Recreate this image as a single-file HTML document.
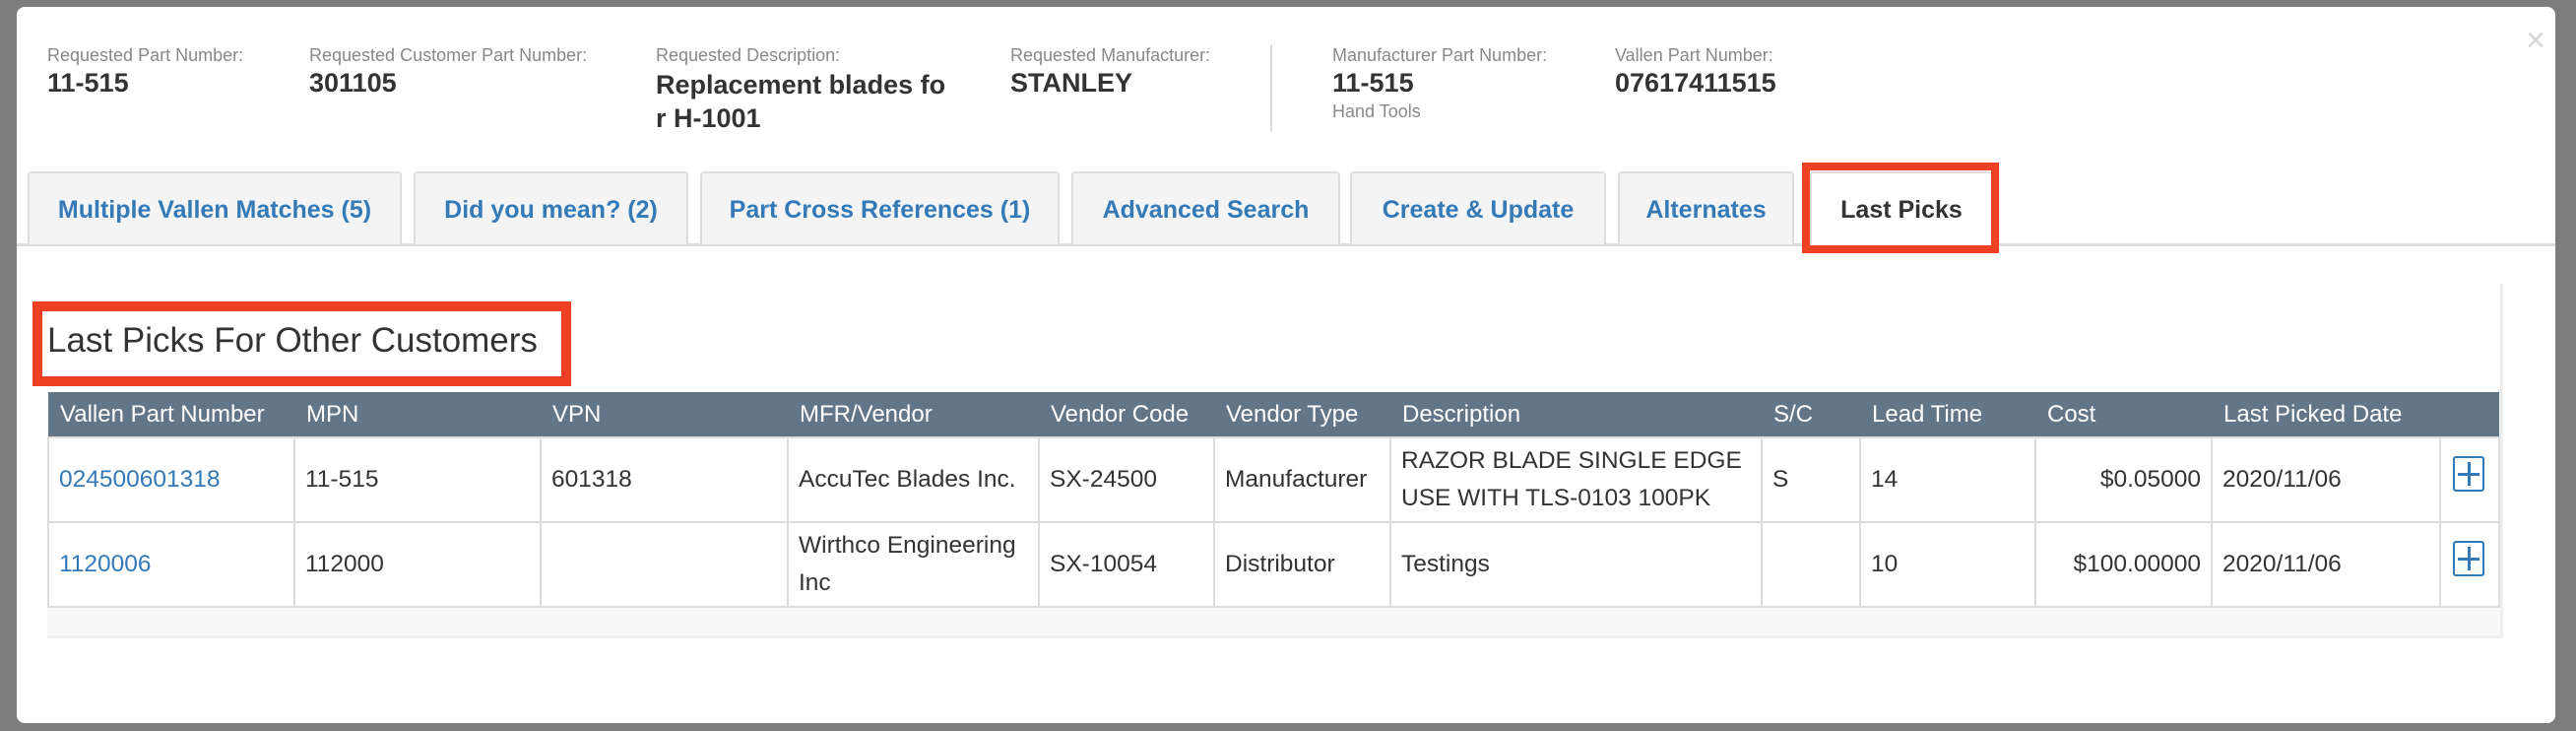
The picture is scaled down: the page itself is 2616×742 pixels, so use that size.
<!DOCTYPE html>
<html><head><meta charset="utf-8"><style>
*{margin:0;padding:0;box-sizing:border-box}
body{width:2616px;height:742px;background:#7d7d7d;font-family:"Liberation Sans",Arial,sans-serif;position:relative;overflow:hidden}
.modal{position:absolute;left:17px;top:7px;width:2578px;height:727px;background:#fff;border-radius:8px}
.a{position:absolute;white-space:nowrap}
.lbl{font-size:18px;color:#888}
.val{font-size:27px;color:#333;font-weight:bold}
.tab{position:absolute;top:174px;height:74px;background:#f4f4f4;border:2px solid #ddd;border-bottom:none;border-radius:4px 4px 0 0;color:#337ab7;font-size:25px;text-align:center;line-height:74px;font-weight:bold}
table{border-collapse:collapse;position:absolute;left:48px;top:398px;width:2489px;font-size:24.5px;color:#333;table-layout:fixed}
th{background:#637687;color:#fff;font-weight:normal;text-align:left;height:46px;padding:0 12px;white-space:nowrap;font-size:24px}
td{border:2px solid #ddd;height:86px;padding:0 10px;line-height:38px;vertical-align:middle;background:#fff}
a{color:#337ab7;text-decoration:none}
.plus{display:inline-block;width:32px;height:36px;border:2px solid #337ab7;border-radius:3px;position:relative}
.plus:before{content:"";position:absolute;left:13px;top:4px;width:3px;height:24px;background:#337ab7}
.plus:after{content:"";position:absolute;left:3px;top:15px;width:22px;height:3px;background:#337ab7}
</style></head><body>
<div class="modal"></div>
<div class="a" style="left:2565px;top:22px;font-size:34px;color:#d5d5d5">×</div>
<div class="a lbl" style="left:48px;top:46px">Requested Part Number:</div>
<div class="a val" style="left:48px;top:69px">11-515</div>
<div class="a lbl" style="left:314px;top:46px">Requested Customer Part Number:</div>
<div class="a val" style="left:314px;top:69px">301105</div>
<div class="a lbl" style="left:666px;top:46px">Requested Description:</div>
<div class="a val" style="left:666px;top:69px;line-height:34px">Replacement blades fo<br>r H-1001</div>
<div class="a lbl" style="left:1026px;top:46px">Requested Manufacturer:</div>
<div class="a val" style="left:1026px;top:69px">STANLEY</div>
<div class="a" style="left:1290px;top:45px;width:2px;height:88px;background:#ddd"></div>
<div class="a lbl" style="left:1353px;top:46px">Manufacturer Part Number:</div>
<div class="a val" style="left:1353px;top:69px">11-515</div>
<div class="a lbl" style="left:1353px;top:103px">Hand Tools</div>
<div class="a lbl" style="left:1640px;top:46px">Vallen Part Number:</div>
<div class="a val" style="left:1640px;top:69px">07617411515</div>

<div class="a" style="left:17px;top:247px;width:2578px;height:3px;background:#ddd"></div>
<div class="tab" style="left:28px;width:380px">Multiple Vallen Matches (5)</div>
<div class="tab" style="left:420px;width:279px">Did you mean? (2)</div>
<div class="tab" style="left:711px;width:365px">Part Cross References (1)</div>
<div class="tab" style="left:1088px;width:273px">Advanced Search</div>
<div class="tab" style="left:1371px;width:260px">Create &amp; Update</div>
<div class="tab" style="left:1643px;width:179px">Alternates</div>
<div class="tab" style="left:1838px;width:186px;height:77px;background:#fff;color:#333;border-color:#ddd">Last Picks</div>
<div class="a" style="left:1830px;top:165px;width:200px;height:92px;border:8px solid #ee4023"></div>

<div class="a" style="left:48px;top:288px;width:2494px;height:360px;background:#f8f8f8;border-right:3px solid #eee;border-bottom:3px solid #eee"></div>
<div class="a" style="left:17px;top:288px;width:2522px;height:110px;background:#fff"></div>
<div class="a" style="left:48px;top:326px;font-size:35px;color:#333">Last Picks For Other Customers</div>
<div class="a" style="left:33px;top:306px;width:547px;height:86px;border:10px solid #ee4023"></div>

<table>
<colgroup><col style="width:250px"><col style="width:250px"><col style="width:251px"><col style="width:255px"><col style="width:178px"><col style="width:179px"><col style="width:377px"><col style="width:100px"><col style="width:178px"><col style="width:179px"><col style="width:232px"><col style="width:60px"></colgroup>
<tr><th>Vallen Part Number</th><th>MPN</th><th>VPN</th><th>MFR/Vendor</th><th>Vendor Code</th><th>Vendor Type</th><th>Description</th><th>S/C</th><th>Lead Time</th><th>Cost</th><th>Last Picked Date</th><th></th></tr>
<tr><td><a>024500601318</a></td><td>11-515</td><td>601318</td><td>AccuTec Blades Inc.</td><td>SX-24500</td><td>Manufacturer</td><td>RAZOR BLADE SINGLE EDGE USE WITH TLS-0103 100PK</td><td>S</td><td>14</td><td style="text-align:right">$0.05000</td><td>2020/11/06</td><td style="padding:0 12px"><span class="plus"></span></td></tr>
<tr><td><a>1120006</a></td><td>112000</td><td></td><td>Wirthco Engineering Inc</td><td>SX-10054</td><td>Distributor</td><td>Testings</td><td></td><td>10</td><td style="text-align:right">$100.00000</td><td>2020/11/06</td><td style="padding:0 12px"><span class="plus"></span></td></tr>
</table>
</body></html>
